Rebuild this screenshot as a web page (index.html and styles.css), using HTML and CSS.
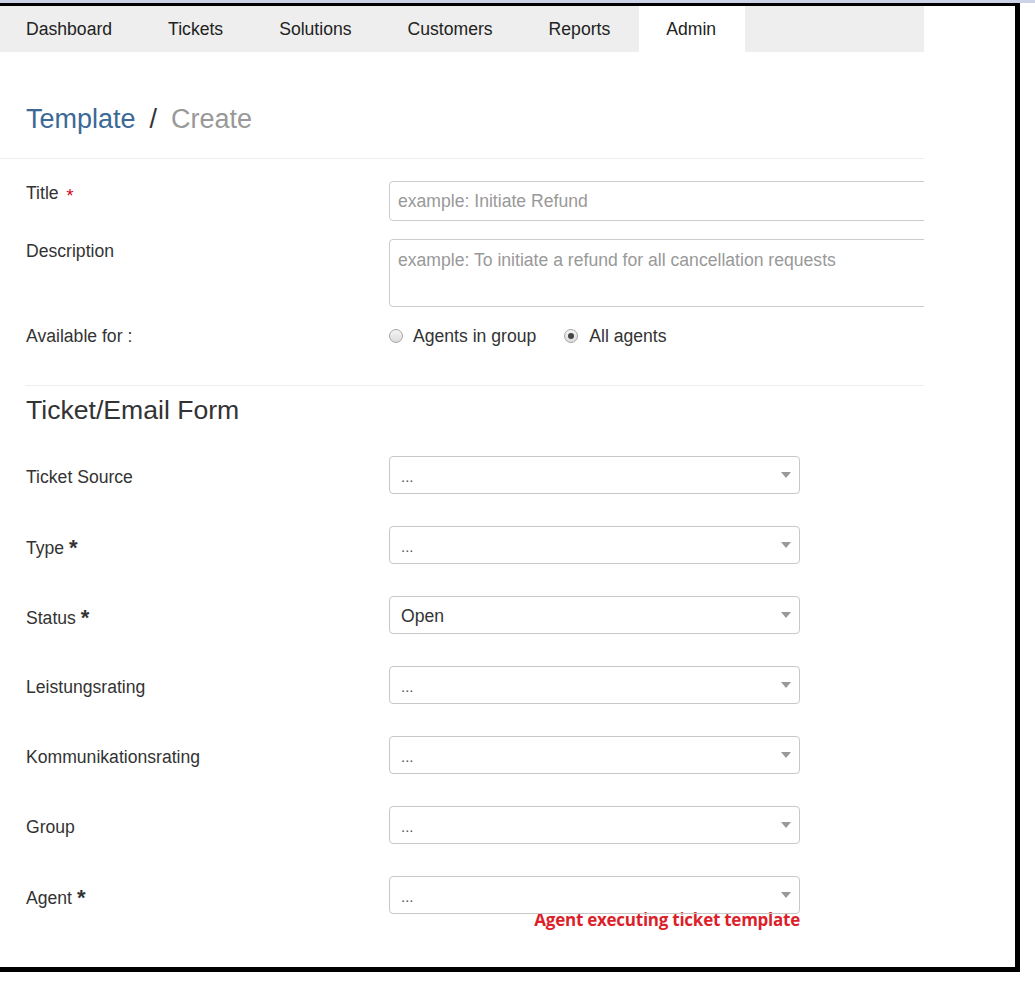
FILE: index.html
```html
<!DOCTYPE html>
<html>
<head>
<meta charset="utf-8">
<link rel="stylesheet" href="styles.css">
</head>
<body>
<div class="shot-top"></div>
<div class="frame">
  <div class="page">
    <nav class="nav">
      <span class="tab">Dashboard</span>
      <span class="tab">Tickets</span>
      <span class="tab">Solutions</span>
      <span class="tab">Customers</span>
      <span class="tab">Reports</span>
      <span class="tab active">Admin</span>
    </nav>
    <header class="crumbs">
      <span class="crumb-link">Template</span><span class="crumb-sep">/</span><span class="crumb-cur">Create</span>
    </header>
    <section class="basic">
      <div class="row">
        <label class="lbl">Title <span class="req-red">*</span></label>
        <div class="input">example: Initiate Refund</div>
      </div>
      <div class="row">
        <label class="lbl">Description</label>
        <div class="input textarea">example: To initiate a refund for all cancellation requests</div>
      </div>
      <div class="row row-avail">
        <label class="lbl">Available for :</label>
        <div class="radios">
          <span class="radio"></span><span class="radio-text">Agents in group</span>
          <span class="radio checked"></span><span class="radio-text">All agents</span>
        </div>
      </div>
    </section>
    <section class="ticket">
      <h2 class="heading">Ticket/Email Form</h2>
      <div class="srow">
        <label class="lbl">Ticket Source</label>
        <div class="select"><span class="dots">...</span><span class="arrow"></span></div>
      </div>
      <div class="srow">
        <label class="lbl">Type <b class="req">*</b></label>
        <div class="select"><span class="dots">...</span><span class="arrow"></span></div>
      </div>
      <div class="srow">
        <label class="lbl">Status <b class="req">*</b></label>
        <div class="select"><span class="val">Open</span><span class="arrow"></span></div>
      </div>
      <div class="srow">
        <label class="lbl">Leistungsrating</label>
        <div class="select"><span class="dots">...</span><span class="arrow"></span></div>
      </div>
      <div class="srow">
        <label class="lbl">Kommunikationsrating</label>
        <div class="select"><span class="dots">...</span><span class="arrow"></span></div>
      </div>
      <div class="srow">
        <label class="lbl">Group</label>
        <div class="select"><span class="dots">...</span><span class="arrow"></span></div>
      </div>
      <div class="srow last">
        <label class="lbl">Agent <b class="req">*</b></label>
        <div class="sel-col">
          <div class="select"><span class="dots">...</span><span class="arrow"></span></div>
          <div class="note">Agent executing ticket template</div>
        </div>
      </div>
    </section>
  </div>
</div>
</body>
</html>
```

FILE: styles.css
```css
* { box-sizing: border-box; }
html, body { margin: 0; padding: 0; background: #fff; }
body {
  font-family: "Liberation Sans", Arial, sans-serif;
  font-size: 17.6px;
  color: #333;
  width: 1035px;
  height: 989px;
  overflow: hidden;
}
.shot-top { height: 3px; background: #cdd3e6; }
.frame {
  width: 1020px;
  height: 969px;
  border-top: 3px solid #000;
  border-right: 5px solid #000;
  border-bottom: 5px solid #000;
}
.page {
  width: 924px;
  height: 100%;
  overflow: hidden;
}
.nav {
  display: flex;
  height: 46px;
  background: #eee;
}
.tab {
  padding: 0 29px 0 27px;
  line-height: 46px;
  color: #222;
}
.tab:first-child { padding-left: 26px; }
.tab.active { background: #fff; }
.crumbs {
  padding: 53px 26px 0;
  height: 107px;
  font-size: 27px;
  line-height: 29px;
  border-bottom: 1px solid #eee;
}
.crumb-link { color: #3d6996; }
.crumb-sep { color: #333; margin: 0 14px 0 14px; }
.crumb-cur { color: #999; }
.basic { padding: 22px 0 0 26px; }
.row {
  display: grid;
  grid-template-columns: 363px 700px;
  margin-bottom: 18px;
}
.lbl {
  display: block;
  line-height: 20px;
  padding-top: 2px;
  color: #333;
}
.req-red {
  color: #d0021b;
  font-size: 18px;
  margin-left: 3px;
  position: relative;
  top: 3px;
}
.req { color: #333; font-weight: bold; font-size: 22px; position: relative; top: 1px; }
.input {
  height: 40px;
  border: 1px solid #ccc;
  border-radius: 4px;
  padding: 0 8px;
  line-height: 38px;
  color: #999;
}
.input.textarea {
  height: 68px;
  line-height: 20px;
  padding-top: 10px;
}
.row-avail { margin-top: 19px; margin-bottom: 0; }
.row-avail .lbl { padding-top: 0; }
.radios {
  display: flex;
  align-items: center;
  height: 20px;
}
.radio {
  width: 14px;
  height: 14px;
  border-radius: 50%;
  border: 1px solid #a6a6a6;
  background: linear-gradient(#f4f4f4, #dcdcdc);
  margin-right: 10px;
  position: relative;
}
.radio.checked { margin-right: 11px; }
.radio.checked::after {
  content: "";
  position: absolute;
  left: 3px;
  top: 3px;
  width: 6px;
  height: 6px;
  border-radius: 50%;
  background: #444;
}
.radio-text { margin-right: 28px; color: #333; }
.ticket {
  margin: 39px 0 0 25px;
  border-top: 1px solid #eee;
  padding-left: 1px;
}
.heading {
  margin: 10px 0 0;
  font-size: 26.6px;
  line-height: 29px;
  font-weight: normal;
  color: #333;
}
.srow {
  display: grid;
  grid-template-columns: 363px 411px;
  align-items: start;
  margin-top: 32px;
}
.ticket .heading + .srow { margin-top: 31px; }
.srow .lbl { padding-top: 11px; line-height: 20px; }
.select {
  position: relative;
  height: 38px;
  border: 1px solid #c8c8c8;
  border-radius: 4px;
  padding: 0 11px;
  line-height: 38px;
}
.dots { color: #555; font-size: 15px; }
.val { color: #333; }
.arrow {
  position: absolute;
  right: 8px;
  top: 15px;
  width: 0;
  height: 0;
  border-left: 5.5px solid transparent;
  border-right: 5.5px solid transparent;
  border-top: 6px solid #999;
}
.note {
  text-align: right;
  font-family: "Open Sans", "Noto Sans", sans-serif;
  font-weight: bold;
  font-size: 17px;
  letter-spacing: -0.25px;
  line-height: 20px;
  color: #dc1f2a;
  margin-top: -4px;
}
```
